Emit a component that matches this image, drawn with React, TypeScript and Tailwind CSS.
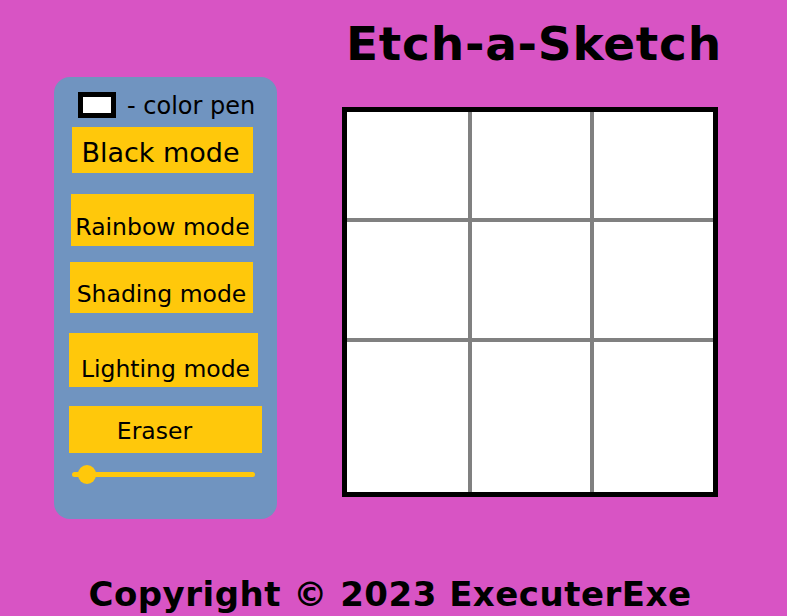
import { useState } from 'react';

const modes = [
  { label: 'Rainbow mode', box: 'ml-[17px] mt-[21px] w-[183px] h-[52px] pt-[20px]' },
  { label: 'Shading mode', box: 'ml-[16px] mt-[16px] w-[183px] h-[51px] pt-[19px]' },
  { label: 'Lighting mode', box: 'ml-[15px] mt-[20px] w-[189px] h-[54px] pt-[23px] pl-[4px]' },
  { label: 'Eraser', box: 'ml-[15px] mt-[19px] w-[193px] h-[47px] pt-[12px] pr-[22px]' },
];

export default function App() {
  const [size, setSize] = useState(3);

  return (
    <div className="w-full h-[616px] bg-[#d854c4] font-['DejaVu_Sans',sans-serif] text-black overflow-hidden">
      <div className="flex h-[519px]">
        {/* controls */}
        <aside className="ml-[54px] mt-[77px] w-[223px] h-[442px] rounded-[16px] bg-[#7094c0] flex flex-col pt-[15px]">
          <div className="flex items-start ml-[24px] h-[26px]">
            <span className="block shrink-0 w-[38px] h-[26px] border-[5px] border-black bg-white" />
            <span className="ml-[11px] text-[24px] leading-[28px]">- color pen</span>
          </div>

          <button className="ml-[18px] mt-[9px] w-[181px] h-[46px] pt-[10px] pr-[4px] bg-[#ffc80b] text-[27px] leading-[31px] self-start flex justify-center items-start">
            Black mode
          </button>

          {modes.map((m) => (
            <button
              key={m.label}
              className={`${m.box} self-start bg-[#ffc80b] text-[23.5px] leading-[27px] flex justify-center items-start`}
            >
              {m.label}
            </button>
          ))}

          <div className="relative ml-[18px] mt-[19px] w-[183px] h-[5px] rounded-full bg-[#ffc80b]">
            <span
              className="absolute top-[-7px] w-[18px] h-[19px] rounded-full bg-[#ffc80b]"
              style={{ left: `${size + 3}px` }}
              onClick={() => setSize(size)}
            />
          </div>
        </aside>

        {/* board */}
        <main className="ml-[65px] w-[376px] pt-[16px] flex flex-col">
          <h1 className="text-[47px] leading-[55px] tracking-[0.75px] font-bold text-center pl-[4px] whitespace-nowrap">Etch-a-Sketch</h1>
          <div className="mt-[36px] w-[376px] h-[390px] border-[5px] border-black bg-white">
            <div className="grid grid-cols-[121px_118px_119px] grid-rows-[106px_116px_150px] gap-[4px] bg-[#808080] w-full h-full">
              {Array.from({ length: 9 }).map((_, i) => (
                <div key={i} className="bg-white" />
              ))}
            </div>
          </div>
        </main>
      </div>

      <footer className="mt-[55px] pr-[7px] text-center text-[34px] leading-[40px] tracking-[0.5px] font-bold whitespace-nowrap">
        Copyright © 2023 ExecuterExe
      </footer>
    </div>
  );
}
